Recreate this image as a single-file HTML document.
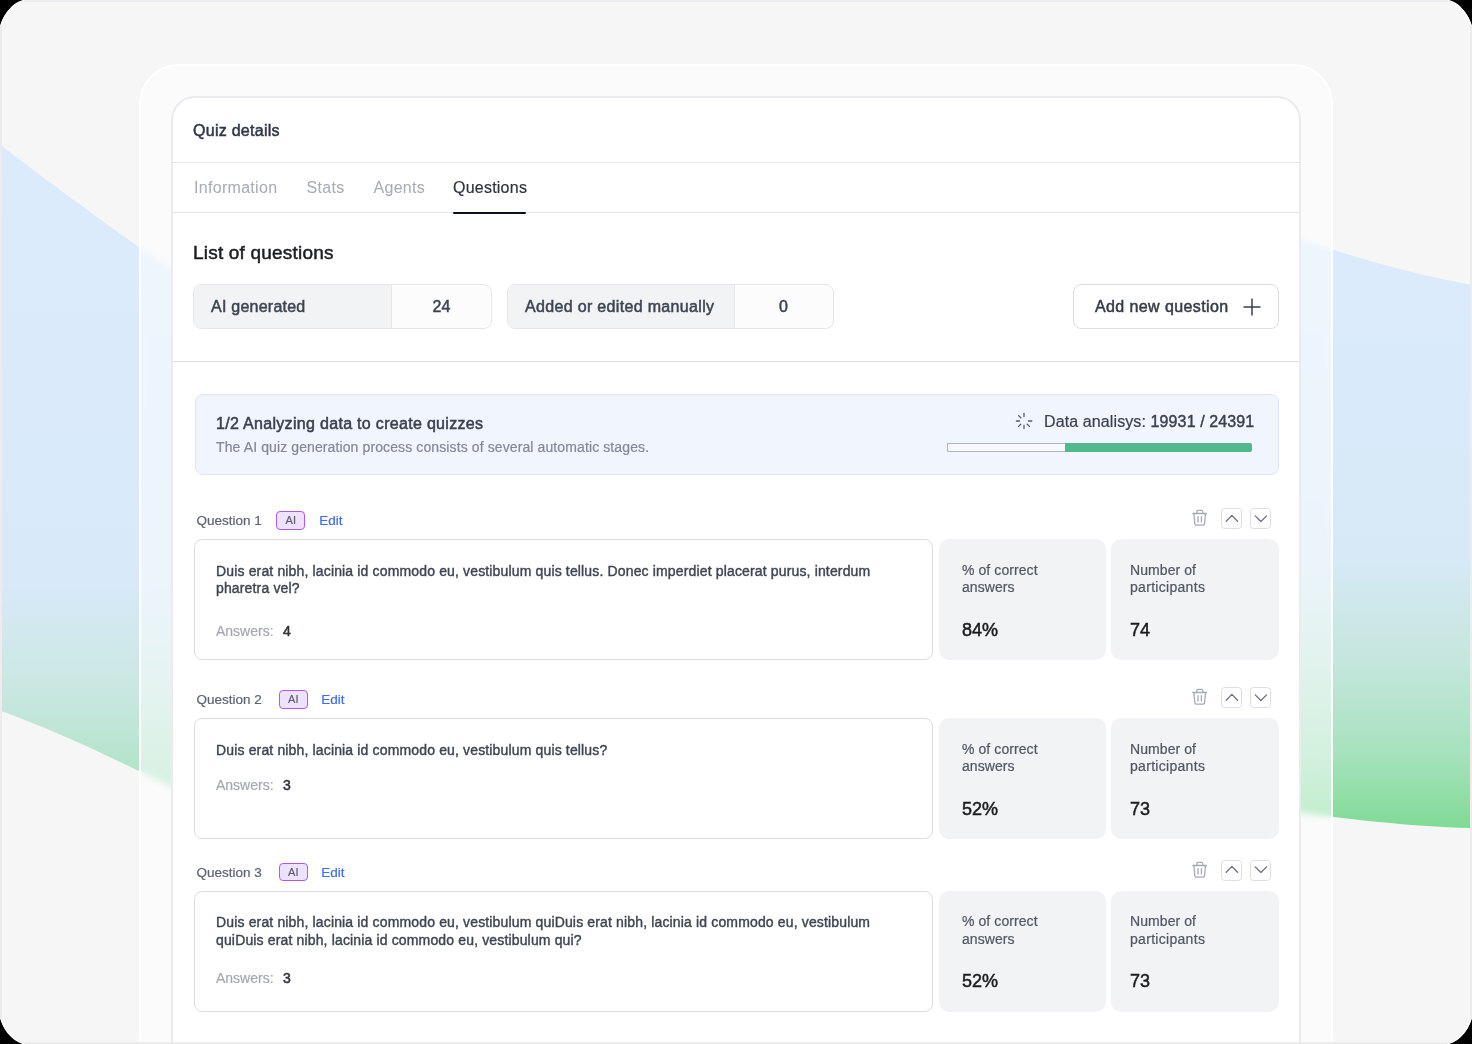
<!DOCTYPE html>
<html><head><meta charset="utf-8">
<style>
*{box-sizing:border-box;margin:0;padding:0}
html,body{width:1472px;height:1044px;overflow:hidden;background:#000}
body{font-family:"Liberation Sans",sans-serif;position:relative}
.frame{position:absolute;left:0;top:0;width:1472px;height:1044px;border-radius:26px;background:#f6f6f6;overflow:hidden}
.frame-border{position:absolute;left:0;top:0;width:1472px;height:1044px;border-radius:26px;border:2px solid #ececee;pointer-events:none;z-index:50}
.bg{position:absolute;left:0;top:0}
.panel{position:absolute;left:139px;top:64px;width:1194px;height:1100px;border-radius:40px;border:2px solid #fff;background:rgba(255,255,255,0.5);backdrop-filter:blur(3px);-webkit-backdrop-filter:blur(3px)}
.card{position:absolute;left:171px;top:96px;width:1130px;height:1100px;border-radius:24px;border:2px solid #ebebef;background:#fff}
#content{position:absolute;left:0;top:0;width:1472px;height:1044px;z-index:5;will-change:transform}
.abs{position:absolute;white-space:nowrap}
.hline{position:absolute;height:1px;background:#e6e7ec}
.box{position:absolute}
</style></head>
<body>
<div class="frame">
  <svg class="bg" width="1472" height="1044" viewBox="0 0 1472 1044">
    <defs>
      <linearGradient id="g1" x1="0" y1="145" x2="0" y2="790" gradientUnits="userSpaceOnUse">
        <stop offset="0" stop-color="#dbebfc"/>
        <stop offset="0.68" stop-color="#d8e9f9"/>
        <stop offset="0.84" stop-color="#cae7e2"/>
        <stop offset="1" stop-color="#ade3c3"/>
      </linearGradient>
      <linearGradient id="g2" x1="0" y1="220" x2="0" y2="830" gradientUnits="userSpaceOnUse">
        <stop offset="0" stop-color="#dbebfc"/>
        <stop offset="0.55" stop-color="#d7e9f7"/>
        <stop offset="0.72" stop-color="#c5e6dd"/>
        <stop offset="0.87" stop-color="#a8e2bf"/>
        <stop offset="1" stop-color="#7fda95"/>
      </linearGradient>
    </defs>
    <path d="M0 144.5 C50 183 100 220 171 269.5 L400 430 L400 900 L171 786.5 C120 762 60 732 0 710.5 Z" fill="url(#g1)"/>
    <path d="M1250 222 C1330 250 1400 272 1472 285 L1472 828 C1400 826 1340 818 1250 806 Z" fill="url(#g2)"/>
  </svg>
  <div class="panel"></div>
  <div class="card"></div>
</div>
<div id="content">
<div class="abs" style="left:193px;top:121.00px;font-size:16px;line-height:20px;color:#2f3747;letter-spacing:0.27px;-webkit-text-stroke:0.5px currentColor;">Quiz details</div>
<div class="hline" style="left:173px;top:162px;width:1126px"></div>
<div class="abs" style="left:194px;top:178.00px;font-size:16px;line-height:20px;color:#a7acb6;letter-spacing:0.3px;-webkit-text-stroke:0.05px currentColor;">Information</div>
<div class="abs" style="left:306.5px;top:178.00px;font-size:16px;line-height:20px;color:#a7acb6;letter-spacing:0.3px;-webkit-text-stroke:0.05px currentColor;">Stats</div>
<div class="abs" style="left:373.5px;top:178.00px;font-size:16px;line-height:20px;color:#a7acb6;letter-spacing:0.3px;-webkit-text-stroke:0.05px currentColor;">Agents</div>
<div class="abs" style="left:453px;top:178.00px;font-size:16px;line-height:20px;color:#2d3340;letter-spacing:0.23px;-webkit-text-stroke:0.2px currentColor;">Questions</div>
<div class="hline" style="left:173px;top:212px;width:1126px"></div>
<div class="box" style="left:453px;top:212px;width:73px;height:2px;border-radius:1px;background:#0b0f1e"></div>
<div class="abs" style="left:193px;top:241.00px;font-size:19px;line-height:24px;color:#1c1d21;letter-spacing:0.2px;-webkit-text-stroke:0.5px currentColor;">List of questions</div>
<div class="box" style="left:193px;top:284px;width:299px;height:45px;border:1px solid #e4e6eb;border-radius:8px;background:#fcfcfd;overflow:hidden"></div>
<div class="box" style="left:194px;top:285px;width:198px;height:43px;background:#f2f3f5;border-right:1px solid #e4e6eb;border-radius:7px 0 0 7px"></div>
<div class="abs" style="left:211px;top:297.00px;font-size:16px;line-height:20px;color:#3d4452;letter-spacing:0.24px;-webkit-text-stroke:0.5px currentColor;">AI generated</div>
<div class="abs" style="left:432.5px;top:297.00px;font-size:16px;line-height:20px;color:#3d4452;letter-spacing:0.2px;-webkit-text-stroke:0.5px currentColor;">24</div>
<div class="box" style="left:507px;top:284px;width:327px;height:45px;border:1px solid #e4e6eb;border-radius:8px;background:#fcfcfd;overflow:hidden"></div>
<div class="box" style="left:508px;top:285px;width:227px;height:43px;background:#f2f3f5;border-right:1px solid #e4e6eb;border-radius:7px 0 0 7px"></div>
<div class="abs" style="left:525px;top:297.00px;font-size:16px;line-height:20px;color:#3d4452;letter-spacing:0.33px;-webkit-text-stroke:0.5px currentColor;">Added or edited manually</div>
<div class="abs" style="left:779px;top:297.00px;font-size:16px;line-height:20px;color:#3d4452;letter-spacing:0px;-webkit-text-stroke:0.5px currentColor;">0</div>
<div class="box" style="left:1073px;top:284px;width:206px;height:45px;border:1.5px solid #dadde3;border-radius:8px;background:#fff"></div>
<div class="abs" style="left:1095px;top:297.00px;font-size:16px;line-height:20px;color:#353b47;letter-spacing:0.4px;-webkit-text-stroke:0.5px currentColor;">Add new question</div>
<svg style="position:absolute;left:1243px;top:298px" width="18" height="18" viewBox="0 0 18 18"><path d="M9 0.5v17M0.5 9h17" stroke="#3a404c" stroke-width="1.5" fill="none"/></svg>
<div class="hline" style="left:173px;top:361px;width:1126px;background:#dcdde5"></div>
<div class="box" style="left:195px;top:394px;width:1084px;height:81px;background:#f1f5fe;border:1px solid #dce5fb;border-radius:8px"></div>
<div class="abs" style="left:216px;top:414.00px;font-size:16px;line-height:20px;color:#3a404c;letter-spacing:0.31px;-webkit-text-stroke:0.5px currentColor;">1/2 Analyzing data to create quizzes</div>
<div class="abs" style="left:216px;top:438.00px;font-size:14px;line-height:18px;color:#838894;letter-spacing:0.11px;-webkit-text-stroke:0.2px currentColor;">The AI quiz generation process consists of several automatic stages.</div>
<svg style="position:absolute;left:1015px;top:412px" width="18" height="18" viewBox="0 0 18 18">
  <g stroke="#565b66" stroke-width="1.3" stroke-linecap="round" transform="translate(9 9)">
    <path d="M0 -7.6v3.1"/><path d="M0 4.5v3.1"/><path d="M-7.6 0h3.1"/><path d="M4.5 0h3.3"/>
    <path d="M-5.4 -5.4l2.2 2.2"/><path d="M3.2 3.2l2.2 2.2"/><path d="M-5.4 5.4l2.2 -2.2"/>
  </g></svg>
<div class="abs" style="left:1044px;top:412.00px;font-size:16px;line-height:20px;color:#3a404c;letter-spacing:0.11px;-webkit-text-stroke:0.2px currentColor;">Data analisys: <span style="-webkit-text-stroke:0.4px currentColor">19931 / 24391</span></div>
<div class="box" style="left:947px;top:443px;width:305px;height:9px;border-radius:2px;background:#52b98f"></div>
<div class="box" style="left:947px;top:443px;width:118px;height:9px;background:#f8f9fe;border:1px solid #b0b4be;border-top-width:1.5px;border-right:none;border-radius:2px 0 0 2px"></div>
<div class="abs" style="left:196.5px;top:512.00px;font-size:13.5px;line-height:17px;color:#5b6270;letter-spacing:0px;-webkit-text-stroke:0.2px currentColor;">Question 1</div>
<div class="box" style="left:276px;top:511px;width:29px;height:18.5px;border:1.5px solid #a959f8;background:#efe2fe;border-radius:4px"></div>
<div class="abs" style="left:285.6px;top:513.00px;font-size:11px;line-height:14px;color:#5f5f6c;letter-spacing:0px;-webkit-text-stroke:0.2px currentColor;">AI</div>
<div class="abs" style="left:319.2px;top:512.00px;font-size:13.5px;line-height:17px;color:#3b6cf4;letter-spacing:0px;-webkit-text-stroke:0.2px currentColor;">Edit</div>
<svg style="position:absolute;left:1191px;top:509px" width="17" height="18" viewBox="0 0 17 18">
    <g fill="none" stroke="#a5aab6" stroke-width="1.3" stroke-linecap="round" stroke-linejoin="round">
      <path d="M1.8 4.5H15.5"/><path d="M5.8 4.5V2.6Q5.8 1.4 7 1.4H10.6Q11.8 1.4 11.8 2.6V4.5"/><path d="M2.9 4.5L3.8 14.6Q4 16.2 5.6 16.2H11.8Q13.4 16.2 13.6 14.6L14.5 4.5"/><path d="M7 7.6V13M10.4 7.6V13"/>
    </g></svg>
<div class="box" style="left:1221px;top:508px;width:21px;height:21px;border:1px solid #dcdee4;border-radius:3.5px;background:#fff"></div>
<svg style="position:absolute;left:1221.5px;top:508.5px" width="20" height="20" viewBox="0 0 20 20"><path d="M4.2 12.2L9.9 6.4l5.6 5.8" fill="none" stroke="#6e6d8a" stroke-width="1.3" stroke-linecap="round" stroke-linejoin="round"/></svg>
<div class="box" style="left:1250px;top:508px;width:21px;height:21px;border:1px solid #dcdee4;border-radius:3.5px;background:#fff"></div>
<svg style="position:absolute;left:1250.5px;top:508.5px" width="20" height="20" viewBox="0 0 20 20"><path d="M4.2 6.9L9.9 12.5l5.7-5.6" fill="none" stroke="#6e6d8a" stroke-width="1.3" stroke-linecap="round" stroke-linejoin="round"/></svg>
<div class="box" style="left:194px;top:539px;width:739px;height:121px;border:1px solid #dadce4;border-radius:8px;background:#fff"></div>
<div class="abs" style="left:216px;top:562.00px;font-size:14px;line-height:18px;color:#3e4552;letter-spacing:0.15px;-webkit-text-stroke:0.4px currentColor;">Duis erat nibh, lacinia id commodo eu, vestibulum quis tellus. Donec imperdiet placerat purus, interdum</div>
<div class="abs" style="left:216px;top:579.00px;font-size:14px;line-height:18px;color:#3e4552;letter-spacing:0.15px;-webkit-text-stroke:0.4px currentColor;">pharetra vel?</div>
<div class="abs" style="left:216px;top:622.00px;font-size:14px;line-height:18px;color:#a3a8b3;letter-spacing:0px;-webkit-text-stroke:0.2px currentColor;">Answers:</div>
<div class="abs" style="left:283px;top:622.00px;font-size:14px;line-height:18px;color:#2b2f38;letter-spacing:0px;-webkit-text-stroke:0.5px currentColor;">4</div>
<div class="box" style="left:938.5px;top:539px;width:167.5px;height:121px;background:#f2f3f5;border-radius:10px"></div>
<div class="abs" style="left:962px;top:561.00px;font-size:14px;line-height:18px;color:#4f5563;letter-spacing:0.08px;-webkit-text-stroke:0.2px currentColor;">% of correct</div>
<div class="abs" style="left:962px;top:578.00px;font-size:14px;line-height:18px;color:#4f5563;letter-spacing:0.08px;-webkit-text-stroke:0.2px currentColor;">answers</div>
<div class="abs" style="left:962px;top:619.00px;font-size:18px;line-height:22px;color:#1c1c1c;letter-spacing:0px;-webkit-text-stroke:0.5px currentColor;">84%</div>
<div class="box" style="left:1111px;top:539px;width:167.5px;height:121px;background:#f2f3f5;border-radius:10px"></div>
<div class="abs" style="left:1130px;top:561.00px;font-size:14px;line-height:18px;color:#4f5563;letter-spacing:0.08px;-webkit-text-stroke:0.2px currentColor;">Number of</div>
<div class="abs" style="left:1130px;top:578.00px;font-size:14px;line-height:18px;color:#4f5563;letter-spacing:0.3px;-webkit-text-stroke:0.2px currentColor;">participants</div>
<div class="abs" style="left:1130px;top:619.00px;font-size:18px;line-height:22px;color:#1c1c1c;letter-spacing:0px;-webkit-text-stroke:0.5px currentColor;">74</div>
<div class="abs" style="left:196.5px;top:691.00px;font-size:13.5px;line-height:17px;color:#5b6270;letter-spacing:0px;-webkit-text-stroke:0.2px currentColor;">Question 2</div>
<div class="box" style="left:278.5px;top:690px;width:29.0px;height:18.5px;border:1.5px solid #a959f8;background:#efe2fe;border-radius:4px"></div>
<div class="abs" style="left:288.1px;top:692.00px;font-size:11px;line-height:14px;color:#5f5f6c;letter-spacing:0px;-webkit-text-stroke:0.2px currentColor;">AI</div>
<div class="abs" style="left:321.2px;top:691.00px;font-size:13.5px;line-height:17px;color:#3b6cf4;letter-spacing:0px;-webkit-text-stroke:0.2px currentColor;">Edit</div>
<svg style="position:absolute;left:1191px;top:688px" width="17" height="18" viewBox="0 0 17 18">
    <g fill="none" stroke="#a5aab6" stroke-width="1.3" stroke-linecap="round" stroke-linejoin="round">
      <path d="M1.8 4.5H15.5"/><path d="M5.8 4.5V2.6Q5.8 1.4 7 1.4H10.6Q11.8 1.4 11.8 2.6V4.5"/><path d="M2.9 4.5L3.8 14.6Q4 16.2 5.6 16.2H11.8Q13.4 16.2 13.6 14.6L14.5 4.5"/><path d="M7 7.6V13M10.4 7.6V13"/>
    </g></svg>
<div class="box" style="left:1221px;top:687px;width:21px;height:21px;border:1px solid #dcdee4;border-radius:3.5px;background:#fff"></div>
<svg style="position:absolute;left:1221.5px;top:687.5px" width="20" height="20" viewBox="0 0 20 20"><path d="M4.2 12.2L9.9 6.4l5.6 5.8" fill="none" stroke="#6e6d8a" stroke-width="1.3" stroke-linecap="round" stroke-linejoin="round"/></svg>
<div class="box" style="left:1250px;top:687px;width:21px;height:21px;border:1px solid #dcdee4;border-radius:3.5px;background:#fff"></div>
<svg style="position:absolute;left:1250.5px;top:687.5px" width="20" height="20" viewBox="0 0 20 20"><path d="M4.2 6.9L9.9 12.5l5.7-5.6" fill="none" stroke="#6e6d8a" stroke-width="1.3" stroke-linecap="round" stroke-linejoin="round"/></svg>
<div class="box" style="left:194px;top:718px;width:739px;height:121px;border:1px solid #dadce4;border-radius:8px;background:#fff"></div>
<div class="abs" style="left:216px;top:741.00px;font-size:14px;line-height:18px;color:#3e4552;letter-spacing:0.15px;-webkit-text-stroke:0.4px currentColor;">Duis erat nibh, lacinia id commodo eu, vestibulum quis tellus?</div>
<div class="abs" style="left:216px;top:776.00px;font-size:14px;line-height:18px;color:#a3a8b3;letter-spacing:0px;-webkit-text-stroke:0.2px currentColor;">Answers:</div>
<div class="abs" style="left:283px;top:776.00px;font-size:14px;line-height:18px;color:#2b2f38;letter-spacing:0px;-webkit-text-stroke:0.5px currentColor;">3</div>
<div class="box" style="left:938.5px;top:718px;width:167.5px;height:121px;background:#f2f3f5;border-radius:10px"></div>
<div class="abs" style="left:962px;top:740.00px;font-size:14px;line-height:18px;color:#4f5563;letter-spacing:0.08px;-webkit-text-stroke:0.2px currentColor;">% of correct</div>
<div class="abs" style="left:962px;top:757.00px;font-size:14px;line-height:18px;color:#4f5563;letter-spacing:0.08px;-webkit-text-stroke:0.2px currentColor;">answers</div>
<div class="abs" style="left:962px;top:798.00px;font-size:18px;line-height:22px;color:#1c1c1c;letter-spacing:0px;-webkit-text-stroke:0.5px currentColor;">52%</div>
<div class="box" style="left:1111px;top:718px;width:167.5px;height:121px;background:#f2f3f5;border-radius:10px"></div>
<div class="abs" style="left:1130px;top:740.00px;font-size:14px;line-height:18px;color:#4f5563;letter-spacing:0.08px;-webkit-text-stroke:0.2px currentColor;">Number of</div>
<div class="abs" style="left:1130px;top:757.00px;font-size:14px;line-height:18px;color:#4f5563;letter-spacing:0.3px;-webkit-text-stroke:0.2px currentColor;">participants</div>
<div class="abs" style="left:1130px;top:798.00px;font-size:18px;line-height:22px;color:#1c1c1c;letter-spacing:0px;-webkit-text-stroke:0.5px currentColor;">73</div>
<div class="abs" style="left:196.5px;top:864.00px;font-size:13.5px;line-height:17px;color:#5b6270;letter-spacing:0px;-webkit-text-stroke:0.2px currentColor;">Question 3</div>
<div class="box" style="left:278.5px;top:862.5px;width:29.0px;height:18.5px;border:1.5px solid #a959f8;background:#efe2fe;border-radius:4px"></div>
<div class="abs" style="left:288.1px;top:865.00px;font-size:11px;line-height:14px;color:#5f5f6c;letter-spacing:0px;-webkit-text-stroke:0.2px currentColor;">AI</div>
<div class="abs" style="left:321.2px;top:864.00px;font-size:13.5px;line-height:17px;color:#3b6cf4;letter-spacing:0px;-webkit-text-stroke:0.2px currentColor;">Edit</div>
<svg style="position:absolute;left:1191px;top:860.5px" width="17" height="18" viewBox="0 0 17 18">
    <g fill="none" stroke="#a5aab6" stroke-width="1.3" stroke-linecap="round" stroke-linejoin="round">
      <path d="M1.8 4.5H15.5"/><path d="M5.8 4.5V2.6Q5.8 1.4 7 1.4H10.6Q11.8 1.4 11.8 2.6V4.5"/><path d="M2.9 4.5L3.8 14.6Q4 16.2 5.6 16.2H11.8Q13.4 16.2 13.6 14.6L14.5 4.5"/><path d="M7 7.6V13M10.4 7.6V13"/>
    </g></svg>
<div class="box" style="left:1221px;top:859.5px;width:21px;height:21.0px;border:1px solid #dcdee4;border-radius:3.5px;background:#fff"></div>
<svg style="position:absolute;left:1221.5px;top:860.0px" width="20" height="20" viewBox="0 0 20 20"><path d="M4.2 12.2L9.9 6.4l5.6 5.8" fill="none" stroke="#6e6d8a" stroke-width="1.3" stroke-linecap="round" stroke-linejoin="round"/></svg>
<div class="box" style="left:1250px;top:859.5px;width:21px;height:21.0px;border:1px solid #dcdee4;border-radius:3.5px;background:#fff"></div>
<svg style="position:absolute;left:1250.5px;top:860.0px" width="20" height="20" viewBox="0 0 20 20"><path d="M4.2 6.9L9.9 12.5l5.7-5.6" fill="none" stroke="#6e6d8a" stroke-width="1.3" stroke-linecap="round" stroke-linejoin="round"/></svg>
<div class="box" style="left:194px;top:890.5px;width:739px;height:121.0px;border:1px solid #dadce4;border-radius:8px;background:#fff"></div>
<div class="abs" style="left:216px;top:913.00px;font-size:14px;line-height:18px;color:#3e4552;letter-spacing:0.15px;-webkit-text-stroke:0.4px currentColor;">Duis erat nibh, lacinia id commodo eu, vestibulum quiDuis erat nibh, lacinia id commodo eu, vestibulum</div>
<div class="abs" style="left:216px;top:931.00px;font-size:14px;line-height:18px;color:#3e4552;letter-spacing:0.15px;-webkit-text-stroke:0.4px currentColor;">quiDuis erat nibh, lacinia id commodo eu, vestibulum qui?</div>
<div class="abs" style="left:216px;top:969.00px;font-size:14px;line-height:18px;color:#a3a8b3;letter-spacing:0px;-webkit-text-stroke:0.2px currentColor;">Answers:</div>
<div class="abs" style="left:283px;top:969.00px;font-size:14px;line-height:18px;color:#2b2f38;letter-spacing:0px;-webkit-text-stroke:0.5px currentColor;">3</div>
<div class="box" style="left:938.5px;top:890.5px;width:167.5px;height:121.0px;background:#f2f3f5;border-radius:10px"></div>
<div class="abs" style="left:962px;top:912.00px;font-size:14px;line-height:18px;color:#4f5563;letter-spacing:0.08px;-webkit-text-stroke:0.2px currentColor;">% of correct</div>
<div class="abs" style="left:962px;top:930.00px;font-size:14px;line-height:18px;color:#4f5563;letter-spacing:0.08px;-webkit-text-stroke:0.2px currentColor;">answers</div>
<div class="abs" style="left:962px;top:970.00px;font-size:18px;line-height:22px;color:#1c1c1c;letter-spacing:0px;-webkit-text-stroke:0.5px currentColor;">52%</div>
<div class="box" style="left:1111px;top:890.5px;width:167.5px;height:121.0px;background:#f2f3f5;border-radius:10px"></div>
<div class="abs" style="left:1130px;top:912.00px;font-size:14px;line-height:18px;color:#4f5563;letter-spacing:0.08px;-webkit-text-stroke:0.2px currentColor;">Number of</div>
<div class="abs" style="left:1130px;top:930.00px;font-size:14px;line-height:18px;color:#4f5563;letter-spacing:0.3px;-webkit-text-stroke:0.2px currentColor;">participants</div>
<div class="abs" style="left:1130px;top:970.00px;font-size:18px;line-height:22px;color:#1c1c1c;letter-spacing:0px;-webkit-text-stroke:0.5px currentColor;">73</div>
</div>
<div class="frame-border"></div>
<svg style="position:absolute;left:0;top:0;z-index:60" width="1472" height="1044" viewBox="0 0 1472 1044">
  <g id="cn">
    <path d="M0 0H24.5C19 1.2 15 3.5 11 7.5C6.5 12 3 17 0.8 24.5H0Z" fill="#000"/>
    <path d="M24.5 0.3C19 1.5 15 3.8 11.2 7.8C6.8 12.2 3.3 17.3 1 24.8" fill="none" stroke="#fff" stroke-width="1.2"/>
  </g>
  <use href="#cn" transform="translate(1472 0) scale(-1 1)"/>
  <use href="#cn" transform="translate(0 1044) scale(1 -1)"/>
  <use href="#cn" transform="translate(1472 1044) scale(-1 -1)"/>
</svg>
</body></html>
